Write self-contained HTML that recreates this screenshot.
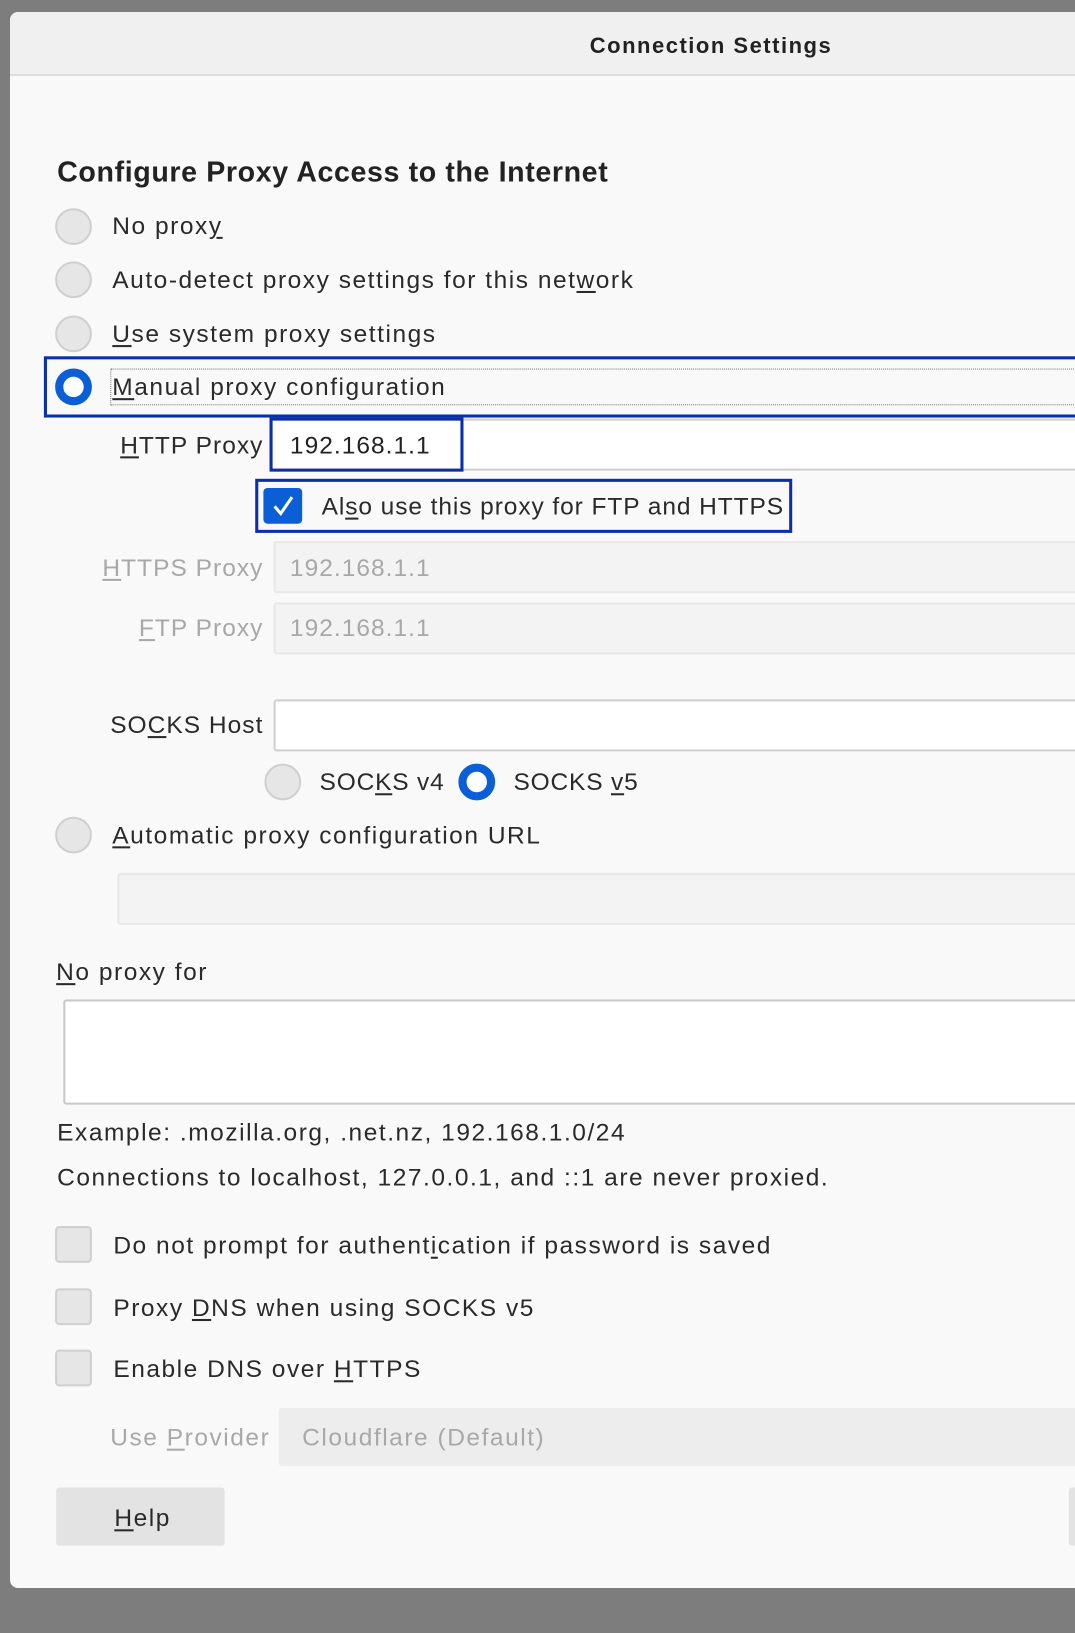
<!DOCTYPE html>
<html><head><meta charset="utf-8"><style>
*{box-sizing:border-box;margin:0;padding:0}
body{width:1075px;height:1600px;background:#7d7d7d;position:relative;overflow:hidden;font-family:"Liberation Sans","DejaVu Sans",sans-serif;color:#2a2a2a;font-size:24px;letter-spacing:1.5px}
.dlg{position:absolute;left:10px;top:12px;width:1080px;height:1576px;background:#f9f9f9;border-radius:8px 0 0 8px;overflow:hidden}
.hdr{position:absolute;left:0;top:0;right:0;height:64px;background:#f0f0f0;border-bottom:2px solid #dedede}
.wrap{position:absolute;left:0;top:0;width:1075px;height:1600px;transform:scale(1.0209);transform-origin:0 0}
.a{position:absolute;white-space:nowrap;line-height:1}
.r{position:absolute;white-space:nowrap;line-height:1;left:0;width:258px;text-align:right;letter-spacing:1px}
.t{position:absolute;left:0;width:1402px;text-align:center;top:21px;font-weight:bold;font-size:22px;color:#222;letter-spacing:1.5px}
.radio{position:absolute;width:36px;height:36px;border-radius:50%;background:#e6e6e6;border:2px solid #cfcfcf}
.radio.on{background:#fff;border:8px solid #0b5fd6}
.cb{position:absolute;width:36px;height:36px;border-radius:4px;background:#e6e6e6;border:2px solid #cfcfcf}
.inp{position:absolute;background:#fff;border:2px solid #cfcfcf;border-radius:3px}
.dis{position:absolute;background:#f3f3f3;border:2px solid #e8e8e8;border-radius:3px}
.g{color:#a8a8a8}
u{text-decoration:underline;text-underline-offset:3px}
.focus{position:absolute;border:3px solid #0a2fa8}
</style></head><body>
<div class="dlg">
<div class="hdr"><div class="t">Connection Settings</div></div>
</div>
<div class="wrap">
<div class="a" style="left:56px;top:155px;font-weight:bold;font-size:28px;color:#222;letter-spacing:0.6px">Configure Proxy Access to the Internet</div>

<div class="radio" style="left:54px;top:204px"></div>
<div class="a" style="left:110px;top:210px">No prox<u>y</u></div>
<div class="radio" style="left:54px;top:256px"></div>
<div class="a" style="left:110px;top:263px">Auto-detect proxy settings for this net<u>w</u>ork</div>
<div class="radio" style="left:54px;top:309px"></div>
<div class="a" style="left:110px;top:316px"><u>U</u>se system proxy settings</div>
<div class="focus" style="left:43px;top:349px;width:1040px;height:60px"></div>
<div style="position:absolute;left:108px;top:361px;width:980px;height:36px;border-top:1px dotted #777;border-bottom:1px dotted #777;border-left:1px dotted #777"></div>
<div class="radio on" style="left:54px;top:361px"></div>
<div class="a" style="left:110px;top:368px"><u>M</u>anual proxy configuration</div>

<div class="r" style="top:425px"><u>H</u>TTP Proxy</div>
<div class="inp" style="left:265px;top:410px;width:820px;height:51px"></div>
<div class="focus" style="left:264px;top:409px;width:190px;height:53px"></div>
<div class="a" style="left:284px;top:425px;color:#222;letter-spacing:1px">192.168.1.1</div>

<div class="focus" style="left:250px;top:469px;width:526px;height:53px"></div>
<div style="position:absolute;left:258px;top:478px;width:38px;height:35px;background:#0b5fd6;border-radius:4px"></div>
<svg style="position:absolute;left:258px;top:478px" width="38" height="35"><path d="M11 18 L17 25 L28 9" stroke="#fff" stroke-width="3" fill="none"/></svg>
<div class="a" style="left:315px;top:485px;letter-spacing:0.9px">Al<u>s</u>o use this proxy for FTP and HTTPS</div>

<div class="r g" style="top:545px"><u>H</u>TTPS Proxy</div>
<div class="dis" style="left:268px;top:530px;width:820px;height:51px"></div>
<div class="a g" style="left:284px;top:545px;letter-spacing:1px">192.168.1.1</div>
<div class="r g" style="top:604px"><u>F</u>TP Proxy</div>
<div class="dis" style="left:268px;top:590px;width:820px;height:51px"></div>
<div class="a g" style="left:284px;top:604px;letter-spacing:1px">192.168.1.1</div>

<div class="r" style="top:699px">SO<u>C</u>KS Host</div>
<div class="inp" style="left:268px;top:685px;width:820px;height:51px"></div>
<div class="radio" style="left:259px;top:748px"></div>
<div class="a" style="left:313px;top:755px;letter-spacing:0.8px">SOC<u>K</u>S v4</div>
<div class="radio on" style="left:449px;top:748px"></div>
<div class="a" style="left:503px;top:755px;letter-spacing:0.8px">SOCKS <u>v</u>5</div>

<div class="radio" style="left:54px;top:800px"></div>
<div class="a" style="left:110px;top:807px"><u>A</u>utomatic proxy configuration URL</div>
<div class="dis" style="left:115px;top:855px;width:970px;height:51px"></div>

<div class="a" style="left:55px;top:941px"><u>N</u>o proxy for</div>
<div class="inp" style="left:62px;top:979px;width:1025px;height:103px;border-color:#c8c8c8"></div>
<div class="a" style="left:56px;top:1098px">Example: .mozilla.org, .net.nz, 192.168.1.0/24</div>
<div class="a" style="left:56px;top:1142px">Connections to localhost, 127.0.0.1, and ::1 are never proxied.</div>

<div class="cb" style="left:54px;top:1201px"></div>
<div class="a" style="left:111px;top:1209px">Do not prompt for authent<u>i</u>cation if password is saved</div>
<div class="cb" style="left:54px;top:1262px"></div>
<div class="a" style="left:111px;top:1270px">Proxy <u>D</u>NS when using SOCKS v5</div>
<div class="cb" style="left:54px;top:1322px"></div>
<div class="a" style="left:111px;top:1330px">Enable DNS over <u>H</u>TTPS</div>

<div class="a g" style="left:108px;top:1397px">Use <u>P</u>rovider</div>
<div style="position:absolute;left:273px;top:1379px;width:815px;height:57px;background:#ededed;border-radius:3px"></div>
<div class="a g" style="left:296px;top:1397px">Cloudflare (Default)</div>

<div style="position:absolute;left:55px;top:1457px;width:165px;height:57px;background:#e3e3e3;border-radius:3px"></div>
<div class="a" style="left:112px;top:1476px"><u>H</u>elp</div>
<div style="position:absolute;left:1047px;top:1457px;width:40px;height:57px;background:#e3e3e3;border-radius:3px"></div>
</div>
</body></html>
